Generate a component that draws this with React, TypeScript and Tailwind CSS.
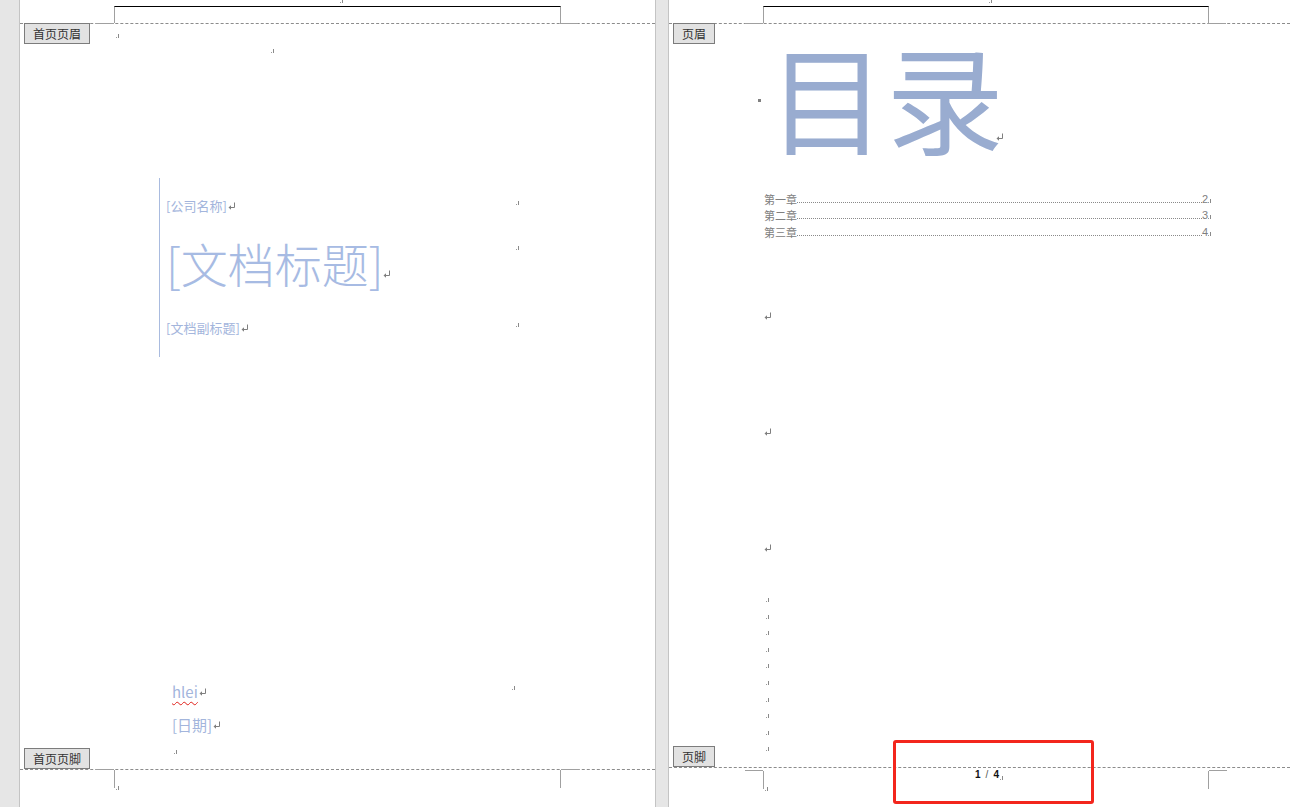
import React from 'react'

// Word-like "print layout" view: two pages side by side

const cjk = "font-['Noto_Sans_CJK_SC','Noto_Sans',sans-serif]"

// paragraph return mark
function Ret({ className = '' }: { className?: string }) {
	return (
		<svg width="8" height="8" viewBox="0 0 8 8" className={`inline-block shrink-0 ${className}`}>
			<path d="M6.5 0.5v5H2" stroke="#7f7f7f" strokeWidth="1" fill="none" />
			<path d="M0.5 5.5l2.5-2.2v4.4z" fill="#7f7f7f" />
		</svg>
	)
}

// tiny end-of-cell mark
function Mark({ className = '', style }: { className?: string; style?: React.CSSProperties }) {
	return (
		<svg width="4" height="5" viewBox="0 0 4 5" className={`block shrink-0 ${className}`} style={style}>
			<rect x="0" y="4" width="1" height="1" fill="#9a9a9a" />
			<rect x="2" y="1" width="1" height="4" fill="#8a8a8a" />
		</svg>
	)
}

function Chip({ text, className = '' }: { text: string; className?: string }) {
	return (
		<div
			className={`absolute left-[4px] h-[21px] border border-[#7c7c7c] bg-[#e2e2e2] px-[8px] text-[12px] leading-[19px] text-[#333] ${cjk} ${className}`}
		>
			{text}
		</div>
	)
}

// header zone: margin rule + dashed separator + crop marks
function Header({ label, left, width }: { label: string; left: number; width: number }) {
	return (
		<div className="relative h-[24px] shrink-0 border-b border-dashed border-[#8c8c8c]">
			<div
				className="mt-[6px] h-[17px] border-x border-t border-x-[#a0a0a0] border-t-black"
				style={{ marginLeft: left, width }}
			/>
			<div className="absolute top-[23px] h-px w-[18px] bg-[#a0a0a0]" style={{ left: left - 18 }} />
			<div className="absolute top-[23px] h-px w-[18px] bg-[#a0a0a0]" style={{ left: left + width - 1 }} />
			<Mark className="absolute top-[-2px] left-[320px]" />
			<Chip text={label} className="top-[23px] z-10" />
		</div>
	)
}

function Footer({
	left,
	width,
	height,
	offset,
	children,
}: {
	left: number
	width: number
	height: number
	offset: number
	children?: React.ReactNode
}) {
	return (
		<div className="relative shrink-0 border-t border-dashed border-[#8c8c8c]" style={{ height }}>
			<div className="flex" style={{ marginLeft: left - 18, width: width + 36, marginTop: offset }}>
				<div className="mt-[-1px] h-px w-[18px] bg-[#a0a0a0]" />
				<div className="h-[18px] flex-1 border-x border-[#a0a0a0]" />
				<div className="mt-[-1px] h-px w-[18px] bg-[#a0a0a0]" />
			</div>
			<Mark className="absolute" style={{ left: left + 2, top: offset + 15 }} />
			{children}
		</div>
	)
}

function CoverPage() {
	return (
		<div className="relative flex h-[807px] w-[635px] shrink-0 flex-col overflow-hidden bg-white">
			<Header label="首页页眉" left={94} width={447} />
			<div className="relative flex min-h-0 flex-1 flex-col">
				<div className="mt-[9px] pl-[96px]">
					<Mark />
				</div>
				<div className="mt-[10px] pl-[251px]">
					<Mark />
				</div>
				<div className="ml-[139px] mt-[125px] flex h-[179px] w-[361px] flex-col border-l border-[#a9bbdf] pl-[6px] text-[#a3b5dc]">
					<div className="mt-[20px] flex items-start justify-between">
						<div className={`flex items-center text-[13px] leading-[16px] ${cjk}`}>
							[公司名称]
							<Ret className="ml-[1px]" />
						</div>
						<Mark className="mt-[2px]" />
					</div>
					<div className="mt-[25px] flex items-start justify-between">
						<div className={`flex items-end text-[47px] font-light leading-[47px] text-[#a7bbe3] ${cjk}`}>
							[文档标题]
							<Ret className="mb-[8px] ml-[-1px]" />
						</div>
						<Mark className="mt-[6px]" />
					</div>
					<div className="mt-[34px] flex items-start justify-between">
						<div className={`flex items-center text-[13px] leading-[16px] ${cjk}`}>
							[文档副标题]
							<Ret className="ml-[1px]" />
						</div>
						<Mark className="mt-[2px]" />
					</div>
				</div>
				<div className="ml-[152px] mt-[327px] flex w-[344px] items-start justify-between text-[#a3b5dc]">
					<div className={`flex items-center text-[15px] leading-[16px] ${cjk}`}>
						<span className="underline decoration-wavy decoration-[#e0201a] decoration-1 underline-offset-[3px]">
							hlei
						</span>
						<Ret className="ml-[1px]" />
					</div>
					<Mark className="mt-[1px]" />
				</div>
				<div className={`ml-[152px] mt-[16px] flex items-center text-[15px] leading-[18px] text-[#a3b5dc] ${cjk}`}>
					[日期]
					<Ret className="ml-[1px]" />
				</div>
				<div className="ml-[154px] mt-[15px]">
					<Mark />
				</div>
				<Chip text="首页页脚" className="bottom-0" />
			</div>
			<Footer left={94} width={447} height={38} offset={0} />
		</div>
	)
}

const chapters = [
	{ name: '第一章', page: '2' },
	{ name: '第二章', page: '3' },
	{ name: '第三章', page: '4' },
]

function TocPage() {
	return (
		<div className="relative flex h-[807px] min-w-0 flex-1 flex-col overflow-hidden bg-white">
			<Header label="页眉" left={94} width={446} />
			<div className="relative flex min-h-0 flex-1 flex-col">
				<div className="mt-[11px] flex items-start pl-[89px]">
					<div className="mt-[64px] h-[3px] w-[3px] bg-[#808080]" />
					<div className={`ml-[7px] text-[118px] leading-[120px] text-[#99acd0] ${cjk}`}>目录</div>
					<Ret className="ml-[-8px] mt-[98px]" />
				</div>
				<div className={`ml-[95px] mt-[34px] flex w-[448px] flex-col text-[11px] text-[#808080] ${cjk}`}>
					{chapters.map((c) => (
						<div key={c.name} className="flex h-[16.5px] items-end">
							<span className="leading-[14px]">{c.name}</span>
							<span className="mb-[3px] flex-1 border-b border-dotted border-[#8a8a8a]" />
							<span className="leading-[14px] font-['Liberation_Sans',sans-serif]">{c.page}</span>
							<Mark className="mb-[3px]" />
						</div>
					))}
				</div>
				<div className="ml-[95px] mt-[70px] flex h-[14px] items-center">
					<Ret />
				</div>
				<div className="ml-[95px] mt-[102px] flex h-[14px] items-center">
					<Ret />
				</div>
				<div className="ml-[95px] mt-[102px] flex h-[14px] items-center">
					<Ret />
				</div>
				<div className="ml-[97px] mt-[37px] flex flex-col">
					{Array.from({ length: 10 }).map((_, i) => (
						<div key={i} className="flex h-[16.55px] items-center">
							<Mark />
						</div>
					))}
				</div>
				<Chip text="页脚" className="bottom-0" />
			</div>
			<Footer left={94} width={446} height={40} offset={3}>
				<div className="absolute left-0 right-0 top-0 flex justify-center">
					<div className="ml-[20px] mt-[1px] flex items-end text-[10px] leading-[12px] text-[#111] font-['Liberation_Sans',sans-serif]">
						<span className="font-bold">1</span>
						<span className="mx-[5px] font-light text-[#555]">/</span>
						<span className="font-bold">4</span>
						<Mark className="mb-[1px] ml-px" />
					</div>
				</div>
			</Footer>
			<div className="absolute left-[224px] top-[740px] h-[64px] w-[201px] rounded-[3px] border-[3px] border-[#f3261d]" />
		</div>
	)
}

export default function App() {
	return (
		<div className="flex h-[807px] w-[1290px] overflow-hidden bg-[#e6e6e6]">
			<div className="w-[20px] shrink-0 border-r border-[#c4c4c4]" />
			<CoverPage />
			<div className="w-[14px] shrink-0 border-x border-[#c4c4c4]" />
			<TocPage />
		</div>
	)
}
